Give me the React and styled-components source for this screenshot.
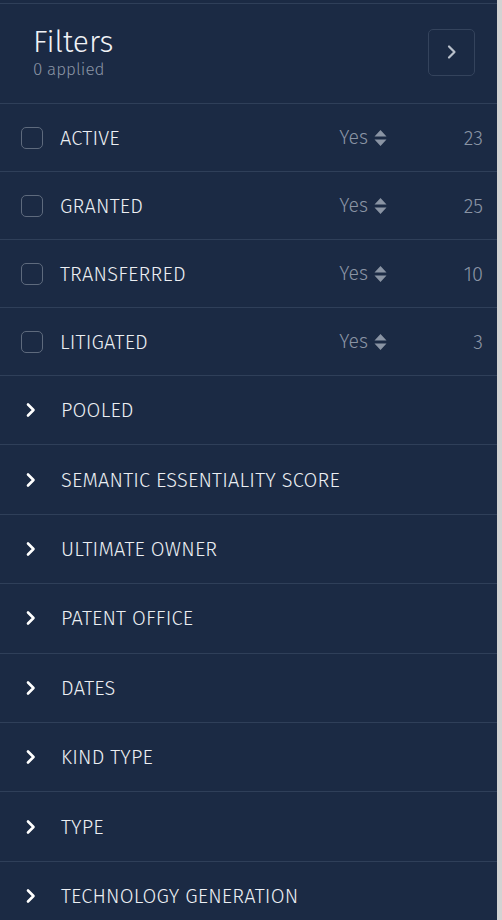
import React from 'react'
import styled, { createGlobalStyle } from 'styled-components'

const Global = createGlobalStyle`
  html, body { margin: 0; padding: 0; background: #d3d3d3; }
  body { font-family: "Fira Sans", "Open Sans", "Liberation Sans", sans-serif; font-weight: 300; }
`

const Page = styled.div`
  display: flex;
  width: 502px;
  height: 920px;
  overflow: hidden;
`

const Panel = styled.aside`
  width: 497px;
  flex: none;
  background: #1b2a44;
  padding-top: 3px;
  box-sizing: border-box;
`

const Header = styled.header`
  display: flex;
  align-items: center;
  justify-content: space-between;
  padding: 0 22px 0 33px;
  border-top: 1px solid #2f3f59;
  border-bottom: 1px solid #2f3f59;
  box-sizing: border-box;
  height: 101px;
`

const TitleBox = styled.div`
  display: flex;
  flex-direction: column;
`

const Title = styled.h1`
  margin: 0;
  font-size: 30px;
  font-weight: 300;
  color: #f1f3f6;
  line-height: 32px;
`

const Sub = styled.span`
  font-size: 17px;
  color: #8a94a4;
  line-height: 24px;
`

const CollapseBtn = styled.button`
  width: 47px;
  height: 47px;
  display: flex;
  align-items: center;
  justify-content: center;
  background: transparent;
  border: 1px solid #34435c;
  border-radius: 5px;
  color: #b9c0cb;
  padding: 0;
  margin-top: -3px;
`

const Row = styled.div`
  display: flex;
  align-items: center;
  height: ${p => (p.$toggle ? '68px' : '69.4px')};
  padding: 0 14px 0 21px;
  border-bottom: 1px solid #2f3f59;
  box-sizing: border-box;
`

const Box = styled.span`
  width: 20px;
  height: 20px;
  border: 1.5px solid #5e6a7d;
  border-radius: 5px;
  flex: none;
`

const Chevron = styled.span`
  width: 23px;
  display: flex;
  justify-content: flex-start;
  padding-left: 4px;
  box-sizing: border-box;
  flex: none;
`

const Label = styled.span`
  margin-left: 17px;
  flex: 1;
  font-size: 20px;
  letter-spacing: 0.2px;
  color: #eceff3;
`

const Select = styled.span`
  display: flex;
  align-items: center;
  gap: 6px;
  color: #8a94a4;
  font-size: 19.5px;
`

const Count = styled.span`
  width: 96px;
  text-align: right;
  color: #8a94a4;
  font-size: 20px;
`

const ChevronIcon = ({ color = '#ffffff', w = 2.6 }) => (
  <svg width="12" height="16" viewBox="0 0 12 16">
    <path d="M3 2.5 L8.5 8 L3 13.5" fill="none" stroke={color} strokeWidth={w} strokeLinecap="round" strokeLinejoin="round" />
  </svg>
)

const SortIcon = () => (
  <svg width="13" height="18" viewBox="0 0 13 18">
    <path d="M6.5 1 L12.5 7.5 H0.5 Z M6.5 17 L12.5 10.5 H0.5 Z" fill="#8a94a4" />
  </svg>
)

const toggles = [
  ['ACTIVE', 23],
  ['GRANTED', 25],
  ['TRANSFERRED', 10],
  ['LITIGATED', 3],
]

const groups = [
  'POOLED',
  'SEMANTIC ESSENTIALITY SCORE',
  'ULTIMATE OWNER',
  'PATENT OFFICE',
  'DATES',
  'KIND TYPE',
  'TYPE',
  'TECHNOLOGY GENERATION',
]

export default function App() {
  return (
    <>
      <Global />
      <Page>
        <Panel>
          <Header>
            <TitleBox>
              <Title>Filters</Title>
              <Sub>0 applied</Sub>
            </TitleBox>
            <CollapseBtn>
              <ChevronIcon color="#b9c0cb" w={2.2} />
            </CollapseBtn>
          </Header>
          {toggles.map(([name, n]) => (
            <Row key={name} $toggle>
              <Box />
              <Label>{name}</Label>
              <Select>Yes <SortIcon /></Select>
              <Count>{n}</Count>
            </Row>
          ))}
          {groups.map(name => (
            <Row key={name}>
              <Chevron><ChevronIcon /></Chevron>
              <Label>{name}</Label>
            </Row>
          ))}
        </Panel>
      </Page>
    </>
  )
}
